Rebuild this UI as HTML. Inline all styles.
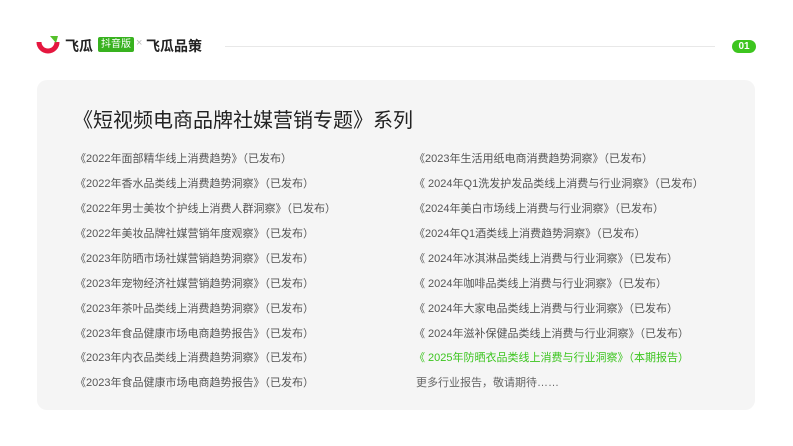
<!DOCTYPE html>
<html><head><meta charset="utf-8"><style>
body{margin:0;width:793px;height:446px;background:#fff;font-family:"Liberation Sans","Noto Sans CJK SC",sans-serif;position:relative;overflow:hidden}
.a{position:absolute;white-space:nowrap}
.card{position:absolute;left:37px;top:80px;width:718px;height:330px;background:#f5f5f5;border-radius:10px}
.it{position:absolute;font-size:11px;color:#555;line-height:14px;white-space:nowrap}
</style></head><body>
<svg class="a" style="left:36px;top:33px" width="26" height="22" viewBox="0 0 26 22">
<path d="M3 9 A9 9 0 0 0 21 9" stroke="#e5173f" stroke-width="5" fill="none"/>
<path d="M14 3 L22 3 L20 10 Z" fill="#55c02a"/>
</svg>
<div class="a" style="left:65px;top:36px;font-size:14px;font-weight:bold;color:#222">飞瓜</div>
<div class="a" style="left:98px;top:37px;background:#38b21f;color:#fff;font-size:10px;padding:1px 3px;border-radius:2px;line-height:13px">抖音版</div>
<div class="a" style="left:136px;top:37px;font-size:11px;color:#bbb">×</div>
<div class="a" style="left:146px;top:36px;font-size:14px;font-weight:bold;color:#222">飞瓜品策</div>
<div class="a" style="left:225px;top:46px;width:490px;height:1px;background:#e8e8e8"></div>
<div class="a" style="left:732px;top:40px;width:24px;height:13px;background:#3dc51f;border-radius:7px;color:#fff;font-size:10px;font-weight:bold;text-align:center;line-height:13px">01</div>
<div class="card"></div>
<div class="a" style="left:73px;top:104px;font-size:20px;color:#222">《短视频电商品牌社媒营销专题》系列</div>
<div class="it" style="left:75px;top:152px">《2022年面部精华线上消费趋势》（已发布）</div>
<div class="it" style="left:75px;top:177px">《2022年香水品类线上消费趋势洞察》（已发布）</div>
<div class="it" style="left:75px;top:202px">《2022年男士美妆个护线上消费人群洞察》（已发布）</div>
<div class="it" style="left:75px;top:227px">《2022年美妆品牌社媒营销年度观察》（已发布）</div>
<div class="it" style="left:75px;top:252px">《2023年防晒市场社媒营销趋势洞察》（已发布）</div>
<div class="it" style="left:75px;top:277px">《2023年宠物经济社媒营销趋势洞察》（已发布）</div>
<div class="it" style="left:75px;top:302px">《2023年茶叶品类线上消费趋势洞察》（已发布）</div>
<div class="it" style="left:75px;top:327px">《2023年食品健康市场电商趋势报告》（已发布）</div>
<div class="it" style="left:75px;top:351px">《2023年内衣品类线上消费趋势洞察》（已发布）</div>
<div class="it" style="left:75px;top:376px">《2023年食品健康市场电商趋势报告》（已发布）</div>
<div class="it" style="left:414px;top:152px">《2023年生活用纸电商消费趋势洞察》（已发布）</div>
<div class="it" style="left:414px;top:177px">《 2024年Q1洗发护发品类线上消费与行业洞察》（已发布）</div>
<div class="it" style="left:414px;top:202px">《2024年美白市场线上消费与行业洞察》（已发布）</div>
<div class="it" style="left:414px;top:227px">《2024年Q1酒类线上消费趋势洞察》（已发布）</div>
<div class="it" style="left:414px;top:252px">《 2024年冰淇淋品类线上消费与行业洞察》（已发布）</div>
<div class="it" style="left:414px;top:277px">《 2024年咖啡品类线上消费与行业洞察》（已发布）</div>
<div class="it" style="left:414px;top:302px">《 2024年大家电品类线上消费与行业洞察》（已发布）</div>
<div class="it" style="left:414px;top:327px">《 2024年滋补保健品类线上消费与行业洞察》（已发布）</div>
<div class="it" style="left:414px;top:351px;color:#3cc51f">《 2025年防晒衣品类线上消费与行业洞察》（本期报告）</div>
<div class="it" style="left:416px;top:376px;color:#666">更多行业报告，敬请期待……</div>
</body></html>
